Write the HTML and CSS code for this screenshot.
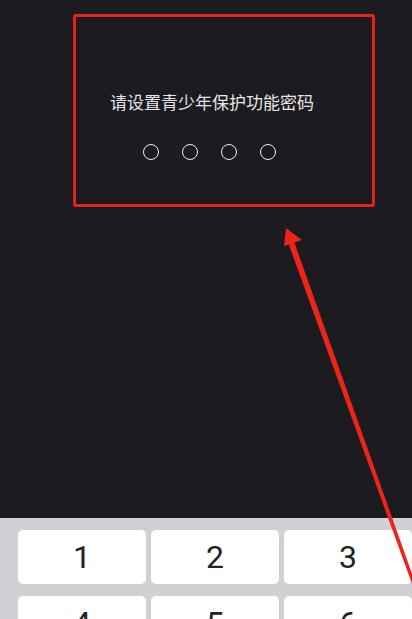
FILE: index.html
```html
<!DOCTYPE html>
<html lang="zh-CN">

<head>
    <meta charset="UTF-8">
    <meta name="viewport" content="width=device-width, initial-scale=1.0">
    <title>青少年保护</title>
    <link rel="stylesheet" href="styles.css">
</head>

<body>
    <div class="tela">

        <div class="marcacao">
            <p class="titulo">请设置青少年保护功能密码</p>
            <div class="senha">
                <span class="ponto"></span>
                <span class="ponto"></span>
                <span class="ponto"></span>
                <span class="ponto"></span>
            </div>
        </div>

        <div class="teclado">
            <div class="tecla">1</div>
            <div class="tecla">2</div>
            <div class="tecla">3</div>
            <div class="tecla">4</div>
            <div class="tecla">5</div>
            <div class="tecla">6</div>
        </div>

        <!-- seta vermelha por cima de tudo -->
        <svg class="seta" width="412" height="619" viewBox="0 0 412 619">
            <polygon points="294.2,242 288.6,244 432.6,640.5 435.4,639.5" fill="#ec2419" />
            <polygon points="286,228 302,240 284,246" fill="#ec2419" />
        </svg>
    </div>
</body>

</html>
```

FILE: styles.css
```css
* {
    padding: 0;
    margin: 0;
    box-sizing: border-box;
}

body {
    background-color: #1c1b20;
    font-family: Roboto, "Noto Sans CJK SC", sans-serif;
    overflow: hidden;
}

.tela {
    position: relative;
    height: 619px;
    display: flex;
    flex-direction: column;
    overflow: hidden;
}

.marcacao {
    margin: 14px 0 0 73px;
    width: 302px;
    height: 193px;
    border: 3px solid #e3241d;
    border-radius: 3px;
    padding: 73px 24px 0 0;
    display: flex;
    flex-direction: column;
    align-items: center;
}

.titulo {
    font-family: "Noto Sans CJK SC", sans-serif;
    font-size: 17px;
    line-height: 24px;
    color: #e6e6e6;
    white-space: nowrap;
}

.senha {
    display: flex;
    gap: 23px;
    margin-top: 30px;
    margin-right: 6px;
}

.ponto {
    width: 16px;
    height: 16px;
    border: 1.5px solid #f0f0f0;
    border-radius: 50%;
}

.teclado {
    margin-top: auto;
    height: 101px;
    background-color: #d0d1d5;
    padding: 12px 0 0 18px;
    display: grid;
    grid-template-columns: 128px 128px 128px;
    grid-auto-rows: 54px;
    gap: 12px 5px;
}

.tecla {
    background-color: #fff;
    border-radius: 5px;
    display: flex;
    align-items: center;
    justify-content: center;
    font-size: 32px;
    color: #222;
}

.seta {
    position: absolute;
    top: 0;
    left: 0;
    pointer-events: none;
}
```
